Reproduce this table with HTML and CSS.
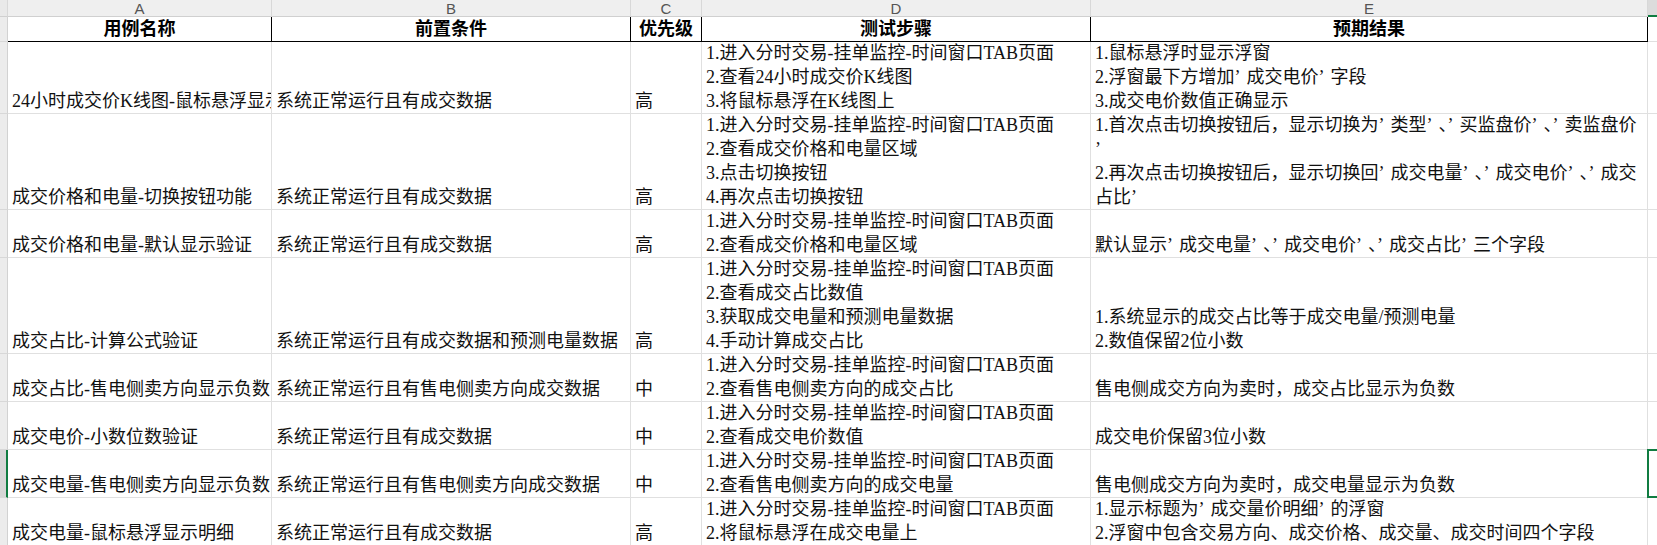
FILE: index.html
```html
<!DOCTYPE html>
<html lang="zh-CN">
<head>
<meta charset="utf-8">
<title>测试用例</title>
<link rel="stylesheet" href="styles.css">
</head>
<body>
<div class="sheet">
  <!-- column header bar -->
  <div class="ch corner"></div>
  <div class="ch">A</div>
  <div class="ch">B</div>
  <div class="ch">C</div>
  <div class="ch">D</div>
  <div class="ch">E</div>
  <div class="ch sel"></div>

  <!-- row 1: table header -->
  <div class="rn"></div>
  <div class="c h">用例名称</div>
  <div class="c h">前置条件</div>
  <div class="c h">优先级</div>
  <div class="c h">测试步骤</div>
  <div class="c h">预期结果</div>
  <div class="c"></div>

  <!-- row 2 -->
  <div class="rn"></div>
  <div class="c"><span>24小时成交价K线图-鼠标悬浮显示成交电价</span></div>
  <div class="c"><span>系统正常运行且有成交数据</span></div>
  <div class="c"><span>高</span></div>
  <div class="c"><span>1.进入分时交易-挂单监控-时间窗口TAB页面</span><span>2.查看24小时成交价K线图</span><span>3.将鼠标悬浮在K线图上</span></div>
  <div class="c"><span>1.鼠标悬浮时显示浮窗</span><span>2.浮窗最下方增加<i class="q">’</i>成交电价<i class="q">’</i>字段</span><span>3.成交电价数值正确显示</span></div>
  <div class="c"></div>

  <!-- row 3 -->
  <div class="rn"></div>
  <div class="c"><span>成交价格和电量-切换按钮功能</span></div>
  <div class="c"><span>系统正常运行且有成交数据</span></div>
  <div class="c"><span>高</span></div>
  <div class="c"><span>1.进入分时交易-挂单监控-时间窗口TAB页面</span><span>2.查看成交价格和电量区域</span><span>3.点击切换按钮</span><span>4.再次点击切换按钮</span></div>
  <div class="c"><span>1.首次点击切换按钮后，显示切换为<i class="q">’</i>类型<i class="q">’</i>、<i class="q">’</i>买监盘价<i class="q">’</i>、<i class="q">’</i>卖监盘价</span><span><i class="q">’</i></span><span>2.再次点击切换按钮后，显示切换回<i class="q">’</i>成交电量<i class="q">’</i>、<i class="q">’</i>成交电价<i class="q">’</i>、<i class="q">’</i>成交</span><span>占比<i class="q">’</i></span></div>
  <div class="c"></div>

  <!-- row 4 -->
  <div class="rn"></div>
  <div class="c"><span>成交价格和电量-默认显示验证</span></div>
  <div class="c"><span>系统正常运行且有成交数据</span></div>
  <div class="c"><span>高</span></div>
  <div class="c"><span>1.进入分时交易-挂单监控-时间窗口TAB页面</span><span>2.查看成交价格和电量区域</span></div>
  <div class="c"><span>默认显示<i class="q">’</i>成交电量<i class="q">’</i>、<i class="q">’</i>成交电价<i class="q">’</i>、<i class="q">’</i>成交占比<i class="q">’</i>三个字段</span></div>
  <div class="c"></div>

  <!-- row 5 -->
  <div class="rn"></div>
  <div class="c"><span>成交占比-计算公式验证</span></div>
  <div class="c"><span>系统正常运行且有成交数据和预测电量数据</span></div>
  <div class="c"><span>高</span></div>
  <div class="c"><span>1.进入分时交易-挂单监控-时间窗口TAB页面</span><span>2.查看成交占比数值</span><span>3.获取成交电量和预测电量数据</span><span>4.手动计算成交占比</span></div>
  <div class="c"><span>1.系统显示的成交占比等于成交电量/预测电量</span><span>2.数值保留2位小数</span></div>
  <div class="c"></div>

  <!-- row 6 -->
  <div class="rn"></div>
  <div class="c"><span>成交占比-售电侧卖方向显示负数</span></div>
  <div class="c"><span>系统正常运行且有售电侧卖方向成交数据</span></div>
  <div class="c"><span>中</span></div>
  <div class="c"><span>1.进入分时交易-挂单监控-时间窗口TAB页面</span><span>2.查看售电侧卖方向的成交占比</span></div>
  <div class="c"><span>售电侧成交方向为卖时，成交占比显示为负数</span></div>
  <div class="c"></div>

  <!-- row 7 -->
  <div class="rn"></div>
  <div class="c"><span>成交电价-小数位数验证</span></div>
  <div class="c"><span>系统正常运行且有成交数据</span></div>
  <div class="c"><span>中</span></div>
  <div class="c"><span>1.进入分时交易-挂单监控-时间窗口TAB页面</span><span>2.查看成交电价数值</span></div>
  <div class="c"><span>成交电价保留3位小数</span></div>
  <div class="c"></div>

  <!-- row 8 -->
  <div class="rn sel"></div>
  <div class="c"><span>成交电量-售电侧卖方向显示负数</span></div>
  <div class="c"><span>系统正常运行且有售电侧卖方向成交数据</span></div>
  <div class="c"><span>中</span></div>
  <div class="c"><span>1.进入分时交易-挂单监控-时间窗口TAB页面</span><span>2.查看售电侧卖方向的成交电量</span></div>
  <div class="c"><span>售电侧成交方向为卖时，成交电量显示为负数</span></div>
  <div class="c selcell"></div>

  <!-- row 9 -->
  <div class="rn"></div>
  <div class="c"><span>成交电量-鼠标悬浮显示明细</span></div>
  <div class="c"><span>系统正常运行且有成交数据</span></div>
  <div class="c"><span>高</span></div>
  <div class="c"><span>1.进入分时交易-挂单监控-时间窗口TAB页面</span><span>2.将鼠标悬浮在成交电量上</span></div>
  <div class="c"><span>1.显示标题为<i class="q">’</i>成交量价明细<i class="q">’</i>的浮窗</span><span>2.浮窗中包含交易方向、成交价格、成交量、成交时间四个字段</span></div>
  <div class="c"></div>
</div>
</body>
</html>
```
FILE: styles.css
```css
* { box-sizing: border-box; }
html, body { margin: 0; padding: 0; background: #fff; }
body {
  width: 1657px;
  height: 545px;
  overflow: hidden;
  font-family: "Liberation Serif", "Noto Sans CJK SC", serif;
}
.sheet {
  display: grid;
  grid-template-columns: 8px 264px 359px 71px 389px 557px 60px;
  grid-template-rows: 17px 25px 72px 96px 48px 96px 48px 48px 48px 48px;
  width: max-content;
}
.ch {
  background: #efefef;
  border-right: 1px solid #d8d8d8;
  border-bottom: 1px solid #d0d0d0;
  font-family: "Liberation Sans", sans-serif;
  font-size: 15px;
  color: #555;
  display: flex;
  align-items: center;
  justify-content: center;
  line-height: 1;
}
.ch.corner { background: #e9e9e9; }
.ch.sel {
  background: #dcdcdc;
  border-bottom: 2px solid #107c41;
}
.rn {
  background: #ececec;
  border-right: 1px solid #d2d2d2;
  border-bottom: 1px solid #d8d8d8;
}
.rn.sel {
  background: #d6d6d6;
  border-right: 2px solid #107c41;
}
.c {
  border-right: 1px solid #e0e0e0;
  border-bottom: 1px solid #e0e0e0;
  font-size: 18px;
  line-height: 24px;
  color: #111;
  padding: 0 4px;
  overflow: hidden;
  white-space: nowrap;
  display: flex;
  flex-direction: column;
  justify-content: flex-end;
}
.c span { display: block; }
.c .q {
  font-style: normal;
  padding-right: 6px;
}
.c.h {
  border-right: 1px solid #000;
  border-bottom: 1px solid #000;
  font-weight: 700;
  align-items: center;
  justify-content: center;
  color: #000;
}
.c.selcell {
  position: relative;
  overflow: visible;
}
.c.selcell::after {
  content: "";
  position: absolute;
  left: -1px;
  top: -1px;
  right: -2px;
  bottom: -1px;
  border: 2px solid #107c41;
}
```
